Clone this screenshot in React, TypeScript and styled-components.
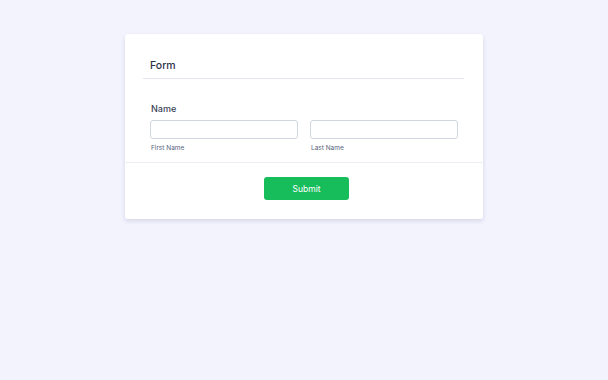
import React from 'react'
import styled, { createGlobalStyle } from 'styled-components'

const GlobalStyle = createGlobalStyle`
  html, body {
    margin: 0;
    padding: 0;
    background: #f3f3fe;
    font-family: Inter, "Liberation Sans", sans-serif;
  }
`

const Page = styled.div`
  display: flex;
  justify-content: center;
  align-items: flex-start;
  padding-top: 34px;
  min-height: 380px;
  box-sizing: border-box;
`

const Card = styled.form`
  width: 358px;
  background: #fff;
  border-radius: 3px;
  box-shadow: 0 2px 4px rgba(42, 42, 90, 0.14);
  display: flex;
  flex-direction: column;
`

const Header = styled.div`
  margin: 0 19px 0 18px;
  padding: 25px 7px 5px;
  border-bottom: 1px solid #e3e5ef;
`

const Title = styled.h1`
  margin: 0;
  font-size: 10.5px;
  line-height: 14px;
  font-weight: 500;
  color: #2c3345;
`

const Body = styled.div`
  padding: 24px 25px 10px;
  border-bottom: 1px solid #eceef6;
`

const Label = styled.div`
  font-size: 9px;
  line-height: 12px;
  font-weight: 500;
  color: #3a4256;
  padding-left: 1px;
  margin-bottom: 5px;
`

const Row = styled.div`
  display: grid;
  grid-template-columns: 1fr 1fr;
  column-gap: 12px;
`

const Field = styled.div`
  display: flex;
  flex-direction: column;
`

const Input = styled.input`
  box-sizing: border-box;
  height: 19px;
  width: 100%;
  border: 1px solid #d0d5df;
  border-radius: 3px;
  background: #fff;
  padding: 0 6px;
  outline: none;
`

const SubLabel = styled.span`
  margin-top: 5px;
  font-size: 6.5px;
  line-height: 8px;
  color: #57647e;
  padding-left: 1px;
`

const Footer = styled.div`
  display: flex;
  justify-content: center;
  padding: 14px 0 19px 5px;
`

const SubmitButton = styled.button`
  width: 85px;
  height: 23px;
  border: 0;
  border-radius: 3px;
  background: #18bd5b;
  color: #fff;
  font-family: inherit;
  font-size: 8.5px;
  font-weight: 400;
  cursor: pointer;
`

const App = () => {
  return (
    <>
      <GlobalStyle />
      <Page>
        <Card onSubmit={(e) => e.preventDefault()}>
          <Header>
            <Title>Form</Title>
          </Header>
          <Body>
            <Label>Name</Label>
            <Row>
              <Field>
                <Input type="text" />
                <SubLabel>First Name</SubLabel>
              </Field>
              <Field>
                <Input type="text" />
                <SubLabel>Last Name</SubLabel>
              </Field>
            </Row>
          </Body>
          <Footer>
            <SubmitButton type="submit">Submit</SubmitButton>
          </Footer>
        </Card>
      </Page>
    </>
  )
}

export default App
